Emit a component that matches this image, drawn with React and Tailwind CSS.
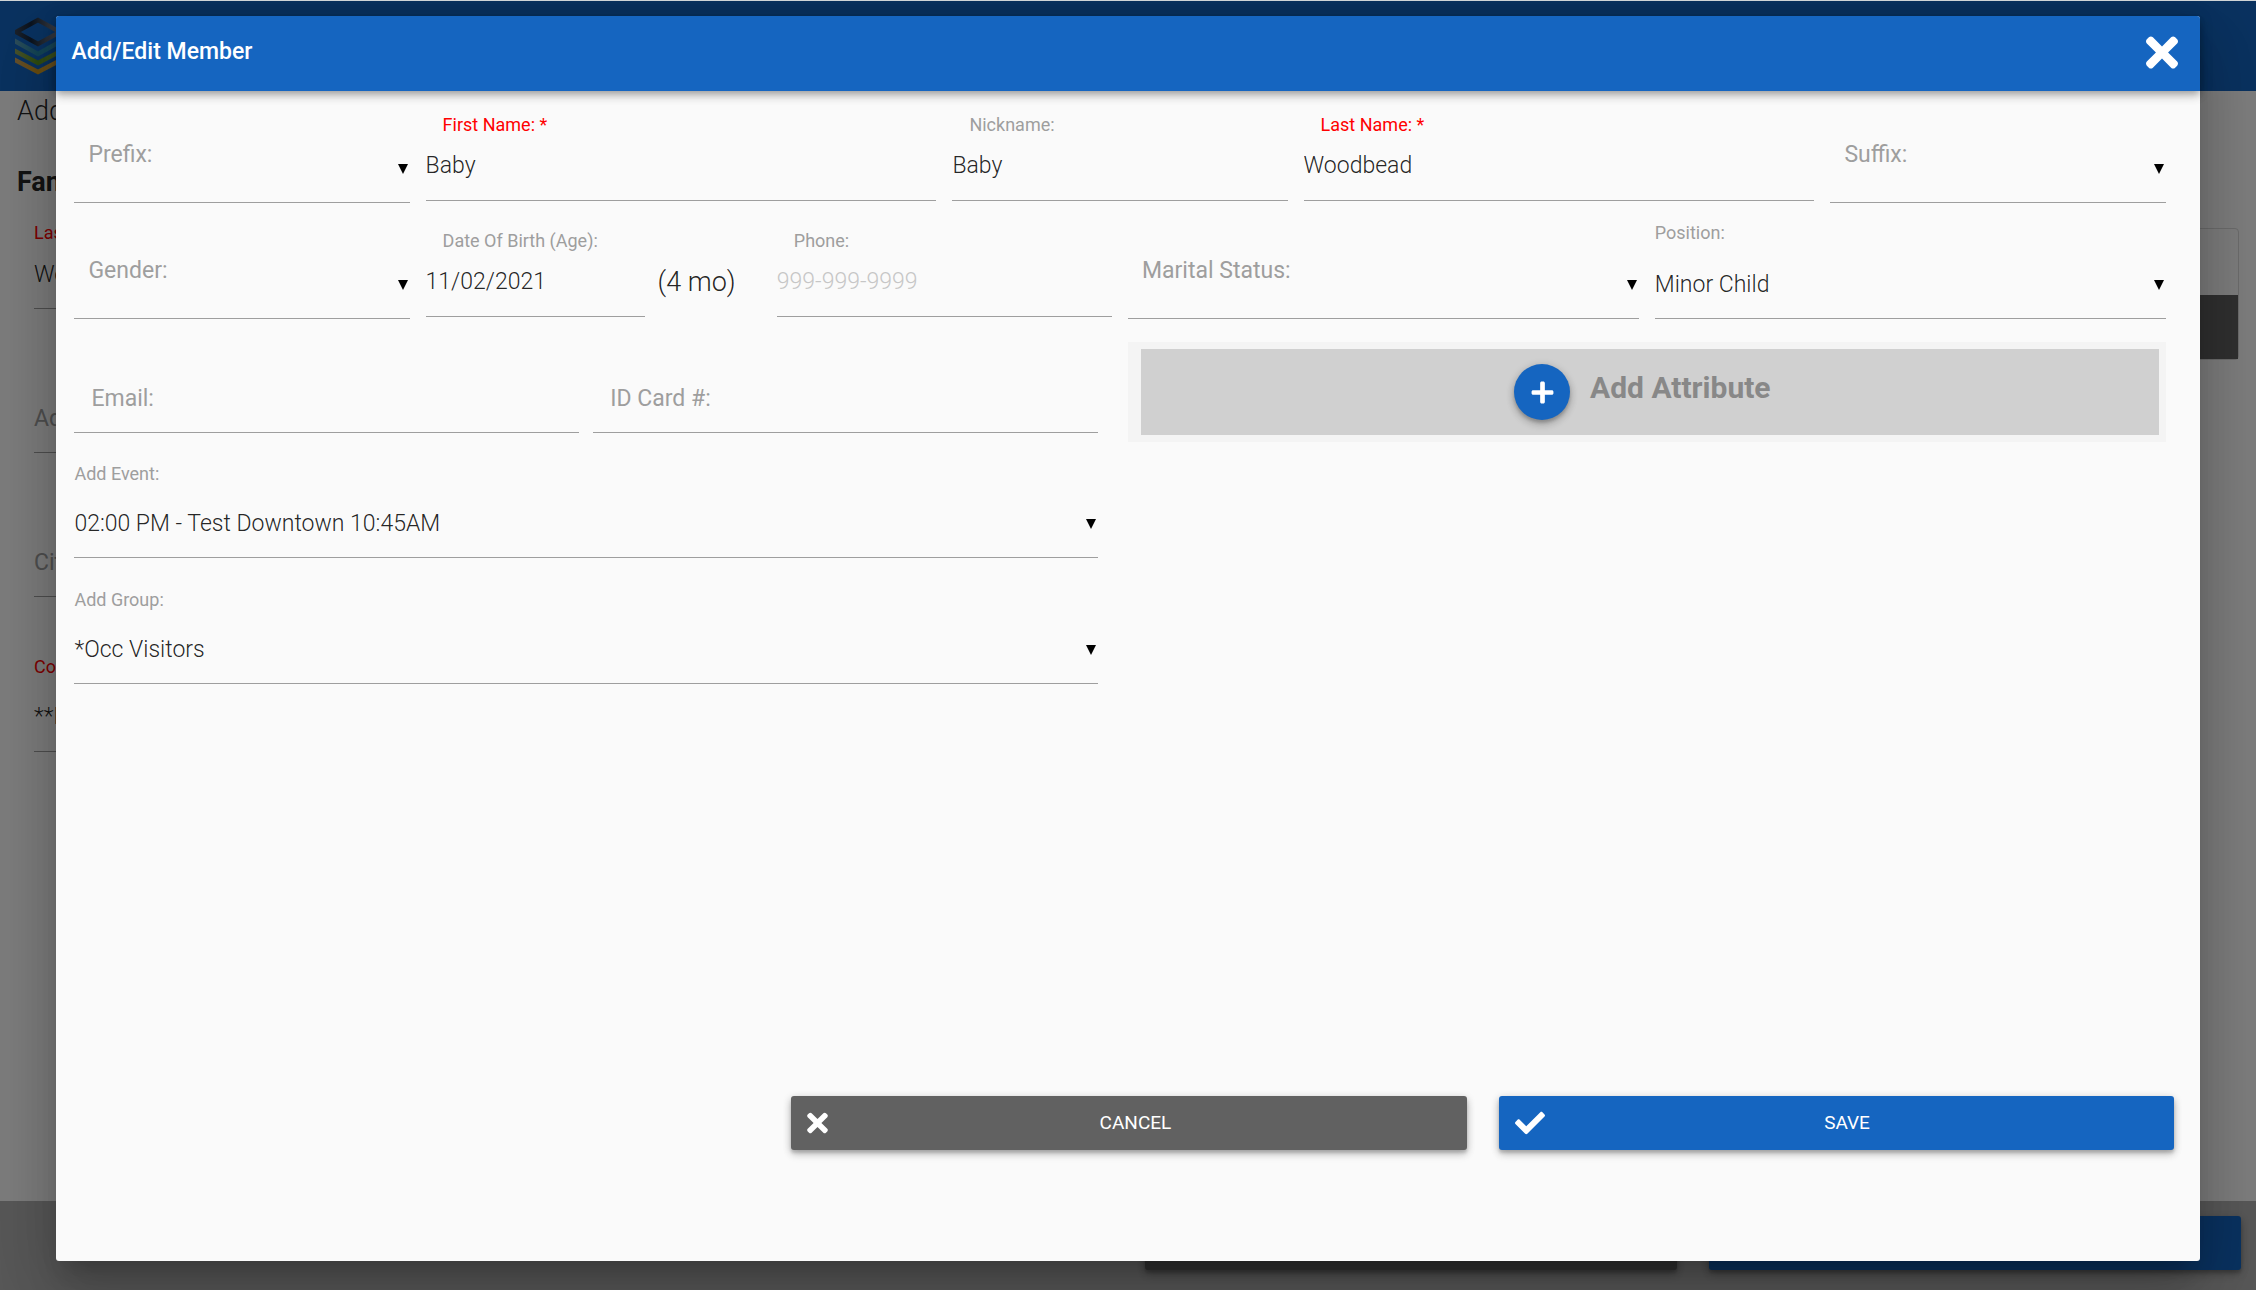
import { FaTimes, FaCheck, FaPlus } from "react-icons/fa";

const line = "w-full border-b border-[#9e9e9e] bg-transparent text-[23px] font-light text-black/87 outline-none";

function Arrow() {
  return (
    <svg viewBox="0 0 10 10" className="pointer-events-none absolute right-0.5 bottom-[29px] size-2.5" aria-hidden="true">
      <path d="M0 0h10L5 10z" fill="#000" />
    </svg>
  );
}

function TextField({ id, label, required, className = "", children, ...rest }) {
  return (
    <div className={className}>
      <label
        htmlFor={id}
        className={`block h-5 pl-[17px] text-lg leading-6 whitespace-nowrap ${required ? "text-[#ff0000]" : "text-[#9e9e9e]"}`}
      >
        {label}
      </label>
      <div className="flex items-center">
        <input id={id} type="text" className={`${line} h-[68px] pb-0.5 placeholder:text-[#c6c6c6]`} {...rest} />
        {children}
      </div>
    </div>
  );
}

function FloatingField({ id, label }) {
  return (
    <div className="relative">
      <label htmlFor={id} className="absolute inset-y-0 left-[17px] flex items-center text-[23px] text-[#9e9e9e]">
        {label}
      </label>
      <input id={id} type="text" className={`${line} relative h-[68px]`} />
    </div>
  );
}

function EmptySelect({ id, label, className = "" }) {
  return (
    <div className={`relative pt-5 ${className}`}>
      <label htmlFor={id} className="absolute top-[30px] left-3.5 text-[23px] leading-6 text-[#9e9e9e]">
        {label}
      </label>
      <select id={id} className={`${line} relative block h-[70px] appearance-none`} defaultValue="">
        <option value=""></option>
      </select>
      <Arrow />
    </div>
  );
}

function FilledSelect({ id, label, value, labelClass, className = "" }) {
  return (
    <div className={`relative ${className}`}>
      <label htmlFor={id} className={`block text-lg leading-5 text-[#9e9e9e] ${labelClass}`}>
        {label}
      </label>
      <select id={id} className={`${line} block h-[70px] appearance-none pt-[3px]`} defaultValue={value}>
        <option>{value}</option>
      </select>
      <Arrow />
    </div>
  );
}

function Logo() {
  return (
    <svg viewBox="0 0 46 58" className="h-[58px] w-[46px]" fill="none" strokeWidth="4.5" aria-hidden="true">
      <defs>
        <linearGradient id="logo-top" x1="0" y1="0" x2="46" y2="0" gradientUnits="userSpaceOnUse">
          <stop offset="0" stopColor="#3a4658" />
          <stop offset="0.35" stopColor="#16263c" />
          <stop offset="1" stopColor="#8a8f9c" />
        </linearGradient>
        <linearGradient id="logo-blue" x1="0" y1="0" x2="46" y2="0" gradientUnits="userSpaceOnUse">
          <stop offset="0" stopColor="#5c9bb4" />
          <stop offset="0.5" stopColor="#2287a8" />
          <stop offset="1" stopColor="#3f93b4" />
        </linearGradient>
        <linearGradient id="logo-green" x1="0" y1="0" x2="46" y2="0" gradientUnits="userSpaceOnUse">
          <stop offset="0" stopColor="#92a35a" />
          <stop offset="0.5" stopColor="#5c961c" />
          <stop offset="1" stopColor="#86a850" />
        </linearGradient>
        <linearGradient id="logo-gold" x1="0" y1="0" x2="46" y2="0" gradientUnits="userSpaceOnUse">
          <stop offset="0" stopColor="#c9a05c" />
          <stop offset="0.5" stopColor="#d0981c" />
          <stop offset="1" stopColor="#d8ac58" />
        </linearGradient>
      </defs>
      <path d="M1 15 23 3 45 15 23 27z" stroke="url(#logo-top)" />
      <path d="M-2 23 23 37 48 23" stroke="url(#logo-blue)" />
      <path d="M-2 33 23 46 48 33" stroke="url(#logo-green)" />
      <path d="M-2 42 23 55 48 42" stroke="url(#logo-gold)" />
    </svg>
  );
}

const buttonShadow =
  "shadow-[0_3px_3px_0_rgba(0,0,0,0.14),0_5px_8px_0_rgba(0,0,0,0.12),0_2px_8px_0_rgba(0,0,0,0.2)]";

function PageField({ label, value, red, valueClass = "", className = "" }) {
  return (
    <div className={`border-b border-[#9e9e9e] ${className}`}>
      <div className={value ? `text-lg leading-5 ${red ? "text-[#ff0000]" : ""}` : "text-[23px] leading-6 text-[#9e9e9e]"}>
        {label}
      </div>
      {value && <div className={`text-[23px] leading-6 font-light ${valueClass}`}>{value}</div>}
    </div>
  );
}

function MemberPage() {
  return (
    <div className="flex min-h-screen flex-col border-t border-[#d0d4d6] bg-[#fafafa] text-black/87">
      <header className="flex h-[90px] items-center bg-[#1565c0] pl-[15px]">
        <Logo />
      </header>
      <main className="flex grow justify-between pr-[17px] pl-[17px]">
        <div className="grow">
          <h1 className="mt-1 text-[27px] leading-8 font-light">Add Family</h1>
          <h2 className="mt-[39px] text-[27px] leading-8 font-bold">Family</h2>
          <div className="pl-[17px]">
            <PageField label="Last Name: *" value="Woodbead" red valueClass="mt-5" className="mt-[25px] h-[86px]" />
            <PageField label="Address:" className="mt-[98px] h-[46px]" />
            <PageField label="City:" className="mt-[98px] h-[46px]" />
            <PageField label="Country: *" value="**None" red valueClass="mt-7" className="mt-[60px] h-[95px]" />
          </div>
        </div>
        <div className="mt-[137px] flex h-[132px] w-64 flex-col justify-end rounded border border-[#d8d8d8]">
          <div className="h-16 bg-[#616161]" />
        </div>
      </main>
      <footer className="flex h-[89px] justify-end gap-8 bg-[#b0b0b0] pt-[15px] pr-[15px]">
        <div className={`h-[54px] w-[532px] rounded-[3px] bg-[#616161] ${buttonShadow}`} />
        <div className={`h-[54px] w-[532px] rounded-[3px] bg-[#1565c0] ${buttonShadow}`} />
      </footer>
    </div>
  );
}

export default function App() {
  return (
    <div className="relative font-[Roboto,sans-serif]">
      <MemberPage />
      <div className="absolute inset-x-0 top-px bottom-0 flex justify-center overflow-hidden bg-black/50 pt-[15px] pb-[29px]">
        <div
          role="dialog"
          aria-labelledby="dialog-title"
          className="flex w-[95%] flex-col rounded-[3px] bg-[#fafafa] shadow-[0_36px_57px_4px_rgba(0,0,0,0.14),0_14px_69px_12px_rgba(0,0,0,0.12),0_16px_22px_-10px_rgba(0,0,0,0.2)]"
        >
          <div className="flex h-[75px] items-center justify-between rounded-t-[3px] bg-[#1565c0] pr-[22px] pb-[3px] pl-[15px] text-white shadow-[0_6px_8px_0_rgba(0,0,0,0.14),0_1px_15px_0_rgba(0,0,0,0.12),0_3px_6px_-1px_rgba(0,0,0,0.2)]">
            <h2 id="dialog-title" className="text-[23px] font-medium">
              Add/Edit Member
            </h2>
            <button type="button" aria-label="Close">
              <FaTimes className="h-[47px] w-8" />
            </button>
          </div>

          <form className="flex grow flex-col">
            <div className="grid grid-cols-12 gap-x-4 gap-y-[26px] pt-[22px] pr-[34px] pl-[18px]">
              <EmptySelect id="prefix" label="Prefix:" className="col-span-2" />
              <TextField id="first" label="First Name: *" required defaultValue="Baby" className="col-span-3" />
              <TextField id="nick" label="Nickname:" defaultValue="Baby" className="col-span-2" />
              <TextField id="last" label="Last Name: *" required defaultValue="Woodbead" className="col-span-3" />
              <EmptySelect id="suffix" label="Suffix:" className="col-span-2" />

              <EmptySelect id="gender" label="Gender:" className="col-span-2" />
              <TextField id="dob" label="Date Of Birth (Age):" defaultValue="11/02/2021" className="col-span-2">
                <span className="w-[51%] pb-0.5 pl-[13px] text-[27px] font-light whitespace-nowrap text-black/87">(4 mo)</span>
              </TextField>
              <TextField id="phone" label="Phone:" placeholder="999-999-9999" className="col-span-2" />
              <EmptySelect id="marital" label="Marital Status:" className="col-span-3" />
              <FilledSelect
                id="position"
                label="Position:"
                value="Minor Child"
                labelClass="-mt-1.5 mb-1.5"
                className="col-span-3"
              />
            </div>

            <div className="grid grid-cols-2 gap-x-4 pr-[34px] pl-[18px]">
              <div className="pt-[46px] pr-3.5">
                <div className="grid grid-cols-2 gap-x-3.5">
                  <FloatingField id="email" label="Email:" />
                  <FloatingField id="card" label="ID Card #:" />
                </div>
                <FilledSelect
                  id="event"
                  label="Add Event:"
                  value="02:00 PM - Test Downtown 10:45AM"
                  labelClass="mb-1"
                  className="mt-[31px]"
                />
                <FilledSelect id="group" label="Add Group:" value="*Occ Visitors" labelClass="mb-1" className="mt-8" />
              </div>
              <div className="pt-[23px]">
                <div className="bg-[#f4f4f4] py-[7px] pr-[7px] pl-[13px]">
                  <button type="button" className="flex h-[86px] w-full items-center justify-center gap-5 bg-[#d0d0d0] pr-[15px]">
                    <span className={`flex size-14 items-center justify-center rounded-full bg-[#1565c0] text-white ${buttonShadow}`}>
                      <FaPlus className="size-[25px]" />
                    </span>
                    <span className="pb-2 text-[30px] leading-8 font-bold text-[#888888]">Add Attribute</span>
                  </button>
                </div>
              </div>
            </div>

            <div className="mt-auto flex justify-end gap-8 pb-[111px]">
              <button
                type="button"
                className={`flex h-[54px] w-[31.5%] items-center rounded-[3px] bg-[#616161] pr-6 pl-4 text-[19px] text-white ${buttonShadow}`}
              >
                <FaTimes className="h-[30px] w-[21px]" />
                <span className="grow text-center">CANCEL</span>
              </button>
              <button
                type="submit"
                className={`mr-[26px] flex h-[54px] w-[31.5%] items-center rounded-[3px] bg-[#1565c0] pr-6 pl-4 text-[19px] text-white ${buttonShadow}`}
              >
                <FaCheck className="size-[30px]" />
                <span className="grow text-center">SAVE</span>
              </button>
            </div>
          </form>
        </div>
      </div>
    </div>
  );
}
